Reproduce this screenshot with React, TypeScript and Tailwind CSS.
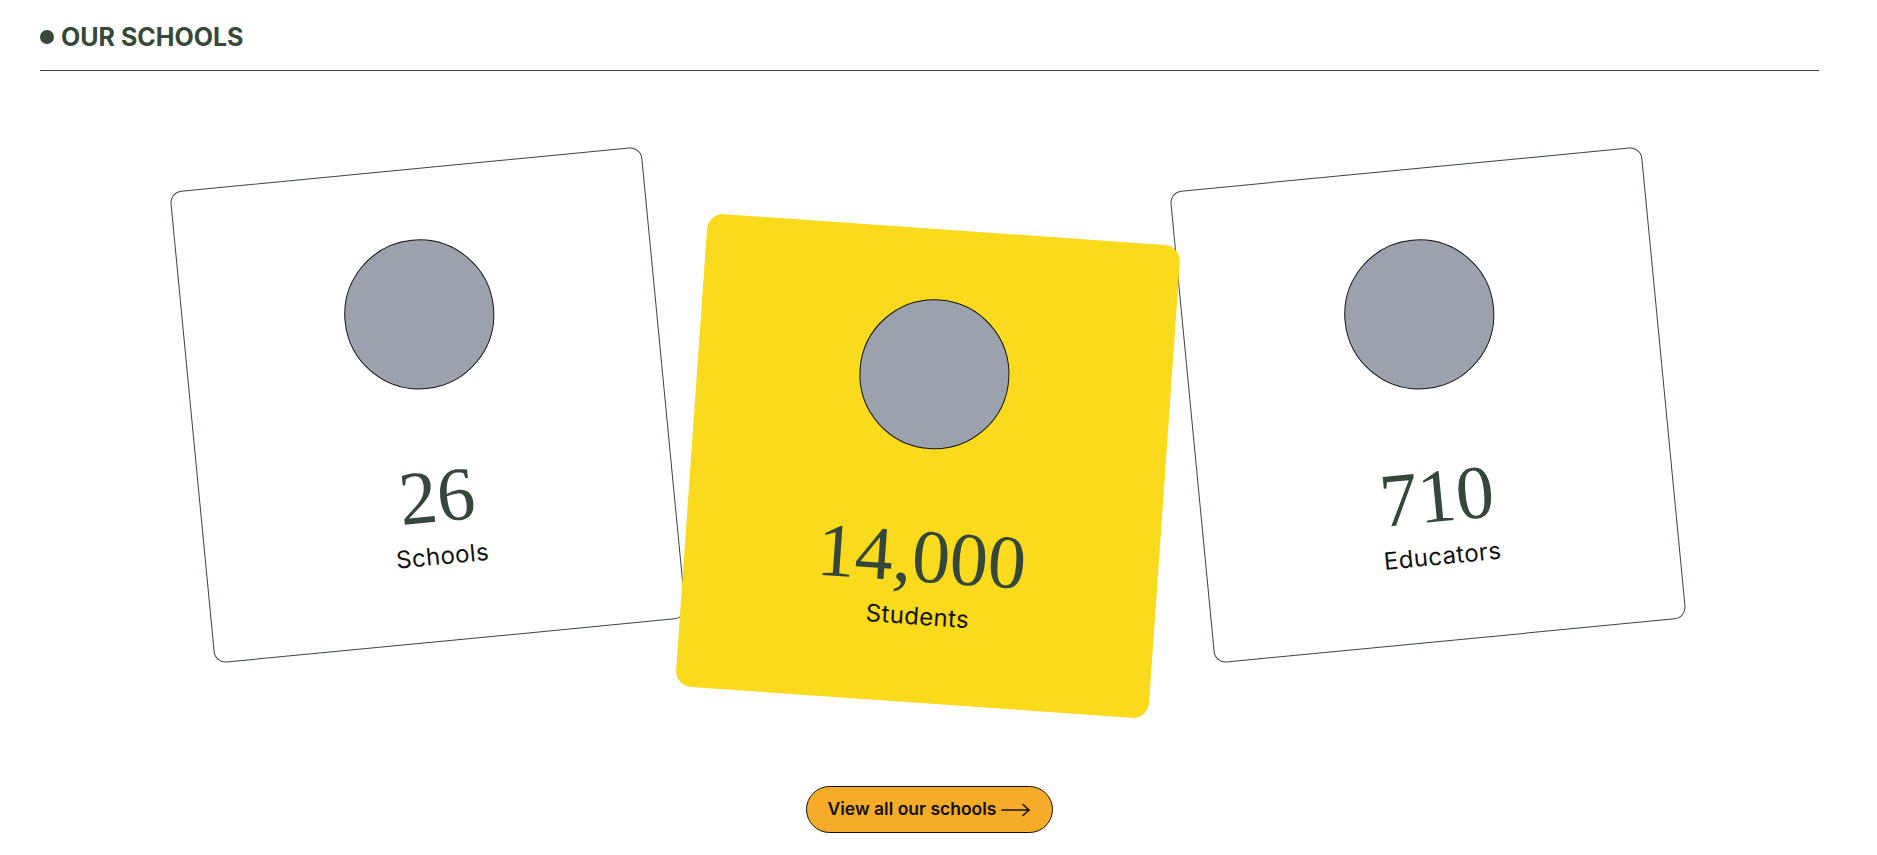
import React from 'react';

type Stat = {
    value: string;
    label: string;
    highlight?: boolean;
};

const stats: Stat[] = [
    { value: '26', label: 'Schools' },
    { value: '14,000', label: 'Students', highlight: true },
    { value: '710', label: 'Educators' },
];

function StatCard({ stat }: { stat: Stat }) {
    const base = 'shrink-0 w-[474px] h-[474px] flex flex-col items-center pt-[70px]';
    const look = stat.highlight
        ? 'relative z-10 mt-[61px] rotate-[4deg] rounded-2xl bg-[#f9da1c]'
        : '-rotate-[5.5deg] rounded-xl border border-[#3a453d] bg-white';

    return (
        <div className={`${base} ${look}`}>
            <div className="w-[150px] h-[150px] rounded-full bg-[#9ca2ad] border border-[#111]" />
            <div className="mt-[69px] text-[76px] leading-none text-[#34473a] oldstyle-nums font-['Liberation_Serif',serif]">
                {stat.value}
            </div>
            <div className="mt-[9px] text-[24px] leading-[28px] tracking-[0.015em] text-[#111] font-['Inter',sans-serif]">
                {stat.label}
            </div>
        </div>
    );
}

export default function App() {
    return (
        <div className="min-h-screen bg-white font-['Inter',sans-serif]">
            <div className="ml-10 mr-[58px]">
                {/* Section heading */}
                <div className="pt-[21px] pb-[17px] border-b border-[#364837] flex items-center gap-[7px]">
                    <span className="w-[14px] h-[14px] rounded-full bg-[#364837]" />
                    <h2 className="text-[25px] leading-8 font-bold text-[#364837]">OUR SCHOOLS</h2>
                </div>

                {/* Stats */}
                <div className="mt-[97px] flex items-start justify-center gap-[26px] pr-[3px]">
                    {stats.map(s => (
                        <StatCard key={s.label} stat={s} />
                    ))}
                </div>

                <div className="mt-[83px] flex justify-center">
                    <button className="h-[47px] flex items-center gap-[5px] pl-[21px] pr-[21px] rounded-full border border-[#111] bg-[#f6ac28] text-[17.5px] font-semibold text-[#111]">
                        View all our schools
                        <svg width="30" height="14" viewBox="0 0 30 14" fill="none" stroke="#111" strokeWidth="1.6" strokeLinecap="round" strokeLinejoin="round">
                            <path d="M1 7h27" />
                            <path d="M22 1.5L28 7l-6 5.5" />
                        </svg>
                    </button>
                </div>
            </div>
        </div>
    );
}
